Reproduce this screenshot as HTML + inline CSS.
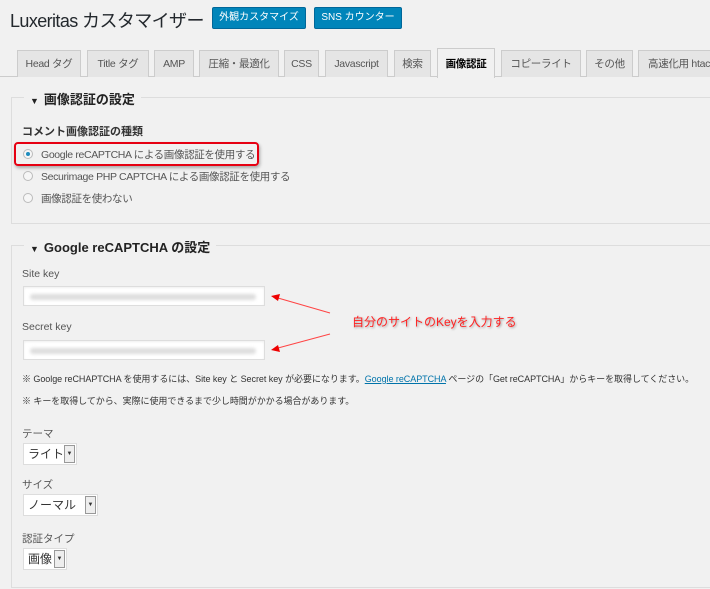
<!DOCTYPE html>
<html><head><meta charset="utf-8">
<style>
*{box-sizing:border-box;margin:0;padding:0}
body{width:710px;height:589px;overflow:hidden;background:#f1f1f1;position:relative;font-family:"Liberation Sans","Noto Sans CJK JP",sans-serif;color:#444;font-size:11px}
.a{position:absolute;white-space:nowrap}
.btn{position:absolute;top:7px;height:22px;background:#0085ba;border:1px solid #006799;border-radius:2px;color:#fff;font-size:10px;line-height:20px;text-align:center;white-space:nowrap}
.tab{position:absolute;top:50px;height:27px;background:#e5e5e5;border:1px solid #ccc;border-bottom:none;font-size:10.5px;color:#555;line-height:26px;text-align:center;white-space:nowrap;overflow:hidden;letter-spacing:-.3px}
.tab.act{background:#f1f1f1;color:#000;top:48px;height:30px;line-height:30px;z-index:2;font-weight:bold}
.fs{position:absolute;border:1px solid #ddd}
.leg{position:absolute;background:#f1f1f1;padding:0 6px;font-size:13px;font-weight:bold;color:#222;white-space:nowrap}
.leg small{font-size:9px;margin-right:5px}
.rad{position:absolute;width:10px;height:10px;border:1px solid #bbb;border-radius:50%;background:#f6f6f6}
.inp{position:absolute;background:#fff;border:1px solid #ddd;box-shadow:inset 0 1px 2px rgba(0,0,0,.07)}
.inp i{position:absolute;left:6px;right:8px;top:7px;height:6px;background:#ddd;border-radius:3px;filter:blur(1.5px)}
.sel{position:absolute;background:#fff;border:1px solid #ddd;font-size:12px;color:#333;padding-left:4px;line-height:20px;white-space:nowrap}
.sel b{position:absolute;right:1px;top:1px;bottom:1px;width:11px;background:#eee;border:1px solid #999;font-size:6px;line-height:17px;text-align:center;font-weight:normal}
.lbl{font-size:10.5px;color:#555}
.r{letter-spacing:-.35px}
</style></head><body>
<div class="a" style="left:10px;top:7px;font-size:18px;color:#23282d;letter-spacing:-.6px">Luxeritas カスタマイザー</div>
<div class="btn" style="left:212px;width:94px">外観カスタマイズ</div>
<div class="btn" style="left:314px;width:88px">SNS カウンター</div>

<div class="a" style="left:0;top:76px;width:710px;border-top:1px solid #ccc"></div>
<div class="tab" style="left:17px;width:64px">Head タグ</div>
<div class="tab" style="left:87px;width:62px">Title タグ</div>
<div class="tab" style="left:154px;width:40px">AMP</div>
<div class="tab" style="left:199px;width:80px">圧縮・最適化</div>
<div class="tab" style="left:284px;width:35px">CSS</div>
<div class="tab" style="left:325px;width:63px">Javascript</div>
<div class="tab" style="left:394px;width:37px">検索</div>
<div class="tab act" style="left:437px;width:58px">画像認証</div>
<div class="tab" style="left:501px;width:80px">コピーライト</div>
<div class="tab" style="left:586px;width:47px">その他</div>
<div class="tab" style="left:638px;width:90px;text-align:left;padding-left:9px">高速化用 htaccess</div>

<div class="fs" style="left:11px;top:97px;width:720px;height:127px"></div>
<div class="leg" style="left:24px;top:89px"><small>▼</small>画像認証の設定</div>
<div class="a" style="left:22px;top:123px;font-size:11px;font-weight:bold;color:#333">コメント画像認証の種類</div>
<div class="a" style="left:14px;top:142px;width:245px;height:24px;border:2px solid #e60012;border-radius:4px;box-shadow:1px 2px 3px rgba(0,0,0,.3)"></div>
<div class="rad" style="left:23px;top:149px"><div style="width:4px;height:4px;margin:2px;border-radius:50%;background:#1e8cbe"></div></div>
<div class="a lbl r" style="left:41px;top:147px">Google reCAPTCHA による画像認証を使用する</div>
<div class="rad" style="left:23px;top:171px"></div>
<div class="a lbl r" style="left:41px;top:169px">Securimage PHP CAPTCHA による画像認証を使用する</div>
<div class="rad" style="left:23px;top:193px"></div>
<div class="a lbl r" style="left:41px;top:191px">画像認証を使わない</div>

<div class="fs" style="left:11px;top:245px;width:720px;height:343px"></div>
<div class="leg" style="left:24px;top:237px"><small>▼</small>Google reCAPTCHA の設定</div>
<div class="a lbl" style="left:22px;top:268px">Site key</div>
<div class="inp" style="left:23px;top:286px;width:242px;height:20px"><i></i></div>
<div class="a lbl" style="left:22px;top:321px">Secret key</div>
<div class="inp" style="left:23px;top:340px;width:242px;height:20px"><i></i></div>
<svg class="a" style="left:0;top:0" width="710" height="589">
<line x1="330" y1="313" x2="278" y2="298" stroke="#f44" stroke-width="1"/>
<polygon points="271,296 280,294 278,301" fill="#e00"/>
<line x1="330" y1="334" x2="278" y2="348" stroke="#f44" stroke-width="1"/>
<polygon points="271,350 278,345 280,352" fill="#e00"/>
</svg>
<div class="a" style="left:352px;top:313px;font-size:12px;color:#f22;text-shadow:1px 1px 2px rgba(0,0,0,.35)">自分のサイトのKeyを入力する</div>
<div class="a" style="left:22px;top:372px;font-size:9px;color:#333;letter-spacing:-.05px">※ Goolge reCHAPTCHA を使用するには、Site key と Secret key が必要になります。<span style="color:#0073aa;text-decoration:underline">Google reCAPTCHA</span> ページの「Get reCAPTCHA」からキーを取得してください。</div>
<div class="a" style="left:22px;top:394px;font-size:9px;color:#333;letter-spacing:-.05px">※ キーを取得してから、実際に使用できるまで少し時間がかかる場合があります。</div>
<div class="a lbl" style="left:22px;top:426px">テーマ</div>
<div class="sel" style="left:23px;top:443px;width:54px;height:22px">ライト<b>▼</b></div>
<div class="a lbl" style="left:22px;top:477px">サイズ</div>
<div class="sel" style="left:23px;top:494px;width:75px;height:22px">ノーマル<b>▼</b></div>
<div class="a lbl" style="left:22px;top:531px">認証タイプ</div>
<div class="sel" style="left:23px;top:548px;width:44px;height:22px">画像<b>▼</b></div>
</body></html>
